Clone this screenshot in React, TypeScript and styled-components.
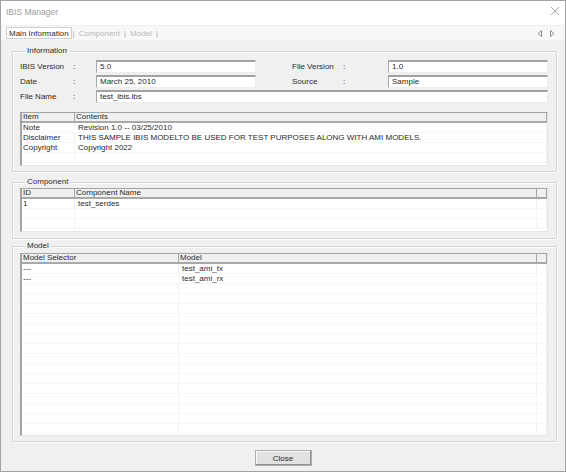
import styled, { createGlobalStyle } from "styled-components";

const GlobalStyle = createGlobalStyle`
  html, body {
    margin: 0;
    padding: 0;
    background: #f0f0f0;
  }
  body {
    font-family: "Liberation Sans", Arial, sans-serif;
    font-size: 8px;
    color: #2a2a2a;
  }
  * {
    box-sizing: border-box;
  }
`;

type Column = {
  title: string;
  width: string;
};

type TableProps = {
  columns: Column[];
  rows: string[][];
  height?: number;
  filler?: boolean;
  minRows: number;
};

const infoColumns: Column[] = [
  { title: "Item", width: "53px" },
  { title: "Contents", width: "1fr" },
];

const infoRows = [
  ["Note", "Revision 1.0 -- 03/25/2010"],
  ["Disclaimer", "THIS SAMPLE IBIS MODELTO BE USED FOR TEST PURPOSES ALONG WITH AMI MODELS."],
  ["Copyright", "Copyright 2022"],
];

const componentColumns: Column[] = [
  { title: "ID", width: "53px" },
  { title: "Component Name", width: "462px" },
];

const modelColumns: Column[] = [
  { title: "Model Selector", width: "157px" },
  { title: "Model", width: "358px" },
];

const modelRows = [
  ["---", "test_ami_tx"],
  ["---", "test_ami_rx"],
];

const DataTable = ({ columns, rows, height, filler, minRows }: TableProps) => {
  const template = columns.map((c) => c.width).join(" ") + (filler ? " 1fr" : "");
  const blanks = Math.max(0, minRows - rows.length);
  const allRows = [...rows, ...Array.from({ length: blanks }, () => columns.map(() => ""))];

  return (
    <TableFrame $height={height}>
      <HeaderRow style={{ gridTemplateColumns: template }}>
        {columns.map((c) => (
          <HeaderCell key={c.title}>{c.title}</HeaderCell>
        ))}
        {filler && <HeaderCell />}
      </HeaderRow>
      {allRows.map((row, i) => (
        <BodyRow key={i} style={{ gridTemplateColumns: template }}>
          {row.map((cell, j) => (
            <BodyCell key={j}>{cell}</BodyCell>
          ))}
          {filler && <BodyCell />}
        </BodyRow>
      ))}
    </TableFrame>
  );
};

const App = () => {
  return (
    <>
      <GlobalStyle />
      <Window>
        <TitleBar>
          <Title>IBIS Manager</Title>
          <CloseGlyph width="10" height="10" viewBox="0 0 10 10">
            <path d="M1 1 L9 9 M9 1 L1 9" stroke="#9a9a9a" strokeWidth="0.9" />
          </CloseGlyph>
        </TitleBar>

        <TabBar>
          <Tab $active>Main Information</Tab>
          <TabSep>|</TabSep>
          <Tab>Component</Tab>
          <TabSep>|</TabSep>
          <Tab>Model</Tab>
          <TabSep>|</TabSep>
          <TabArrows>
            <svg width="6" height="7" viewBox="0 0 6 7">
              <path d="M4.5 0.5 L1 3.5 L4.5 6.5 Z" fill="none" stroke="#777" strokeWidth="0.8" />
            </svg>
            <svg width="6" height="7" viewBox="0 0 6 7">
              <path d="M1.5 0.5 L5 3.5 L1.5 6.5 Z" fill="none" stroke="#777" strokeWidth="0.8" />
            </svg>
          </TabArrows>
        </TabBar>

        <Body>
          <GroupBox $top={6} $pad="4px 8px 5px 7px">
            <Legend>Information</Legend>
            <FieldGrid>
              <Label>IBIS Version</Label>
              <Colon>:</Colon>
              <TextBox>5.0</TextBox>
              <Spacer />
              <Label>File Version</Label>
              <Colon>:</Colon>
              <TextBox>1.0</TextBox>

              <Label>Date</Label>
              <Colon>:</Colon>
              <TextBox>March 25, 2010</TextBox>
              <Spacer />
              <Label>Source</Label>
              <Colon>:</Colon>
              <TextBox>Sample</TextBox>

              <Label>File Name</Label>
              <Colon>:</Colon>
              <TextBox $wide>test_ibis.ibs</TextBox>
            </FieldGrid>
            <TableGap />
            <DataTable columns={infoColumns} rows={infoRows} height={54} minRows={4} />
          </GroupBox>

          <GroupBox $top={5} $pad="1px 8px 6px 7px">
            <Legend>Component</Legend>
            <DataTable
              columns={componentColumns}
              rows={[["1", "test_serdes"]]}
              height={44}
              filler
              minRows={3}
            />
          </GroupBox>

          <GroupBox $top={2} $pad="2px 8px 5px 7px" $grow>
            <Legend>Model</Legend>
            <DataTable columns={modelColumns} rows={modelRows} filler minRows={18} />
          </GroupBox>
        </Body>

        <Footer>
          <CloseButton>Close</CloseButton>
        </Footer>
      </Window>
    </>
  );
};

const Window = styled.div`
  width: 566px;
  height: 472px;
  border: 1px solid #a3a3a3;
  background: #f0f0f0;
  display: flex;
  flex-direction: column;
  overflow: hidden;
`;

const TitleBar = styled.div`
  height: 24px;
  background: #fff;
  display: flex;
  align-items: center;
  justify-content: space-between;
  padding: 0 5px 2px 5px;
`;

const Title = styled.span`
  font-size: 8.5px;
  color: #9a9a9a;
`;

const CloseGlyph = styled.svg`
  margin-bottom: 3px;
`;

const TabBar = styled.div`
  height: 14px;
  margin-top: 1px;
  background: #f8f8f8;
  display: flex;
  align-items: stretch;
  padding-left: 5px;
`;

const Tab = styled.div<{ $active?: boolean }>`
  display: flex;
  align-items: center;
  padding: 0 2px;
  margin-top: 1px;
  height: 12px;
  color: ${(p) => (p.$active ? "#2a2a2a" : "#b8b8b8")};
  background: ${(p) => (p.$active ? "#fff" : "transparent")};
  border: 1px solid ${(p) => (p.$active ? "#cfcfcf" : "transparent")};
`;

const TabSep = styled.span`
  display: flex;
  align-items: center;
  color: #a8a8a8;
  padding: 0 1px;
`;

const TabArrows = styled.div`
  margin-left: auto;
  margin-right: 10px;
  display: flex;
  align-items: center;
  gap: 6px;
`;

const Body = styled.div`
  flex: 1;
  display: flex;
  flex-direction: column;
  padding: 0 8px 0 11px;
  min-height: 0;
`;

const GroupBox = styled.fieldset<{ $top: number; $pad: string; $grow?: boolean }>`
  margin: ${(p) => p.$top}px 0 0 0;
  padding: ${(p) => p.$pad};
  border: 1px solid #d6d6d6;
  box-shadow: inset 1px 1px 0 #fbfbfb, 1px 1px 0 #fbfbfb;
  min-width: 0;
  display: flex;
  flex-direction: column;
  flex: ${(p) => (p.$grow ? "1" : "none")};
  min-height: 0;
`;

const Legend = styled.legend`
  font-size: 8px;
  line-height: 10px;
  padding: 0 2px;
  margin-left: 5px;
`;

const FieldGrid = styled.div`
  display: grid;
  grid-template-columns: 53px 23px 160px 36px 51px 45px 1fr;
  grid-auto-rows: 13px;
  row-gap: 2px;
  align-items: center;
`;

const Label = styled.span`
  line-height: 10px;
`;

const Colon = styled.span`
  line-height: 10px;
`;

const Spacer = styled.span``;

const TextBox = styled.div<{ $wide?: boolean }>`
  height: 13px;
  grid-column: ${(p) => (p.$wide ? "3 / -1" : "auto")};
  background: #fff;
  border-top: 2px solid #a2a2a2;
  border-left: 1px solid #a8a8a8;
  border-right: 1px solid #ededed;
  border-bottom: 1px solid #ededed;
  padding: 0 3px;
  line-height: 10px;
  white-space: nowrap;
`;

const TableGap = styled.div`
  height: 9px;
`;

const TableFrame = styled.div<{ $height?: number }>`
  height: ${(p) => (p.$height ? `${p.$height}px` : "auto")};
  flex: ${(p) => (p.$height ? "none" : "1")};
  background: #fff;
  border-top: 1px solid #a4a4a4;
  border-left: 2px solid #a4a4a4;
  border-right: 1px solid #e6e6e6;
  border-bottom: 1px solid #e6e6e6;
  overflow: hidden;
`;

const HeaderRow = styled.div`
  display: grid;
  height: 10px;
  background: #f0f0f0;
  border-bottom: 2px solid #a8a8a8;
`;

const HeaderCell = styled.div`
  line-height: 8px;
  padding-left: 1px;
  border-right: 1.5px solid #a4a4a4;
  white-space: nowrap;
  overflow: hidden;
`;

const BodyRow = styled.div`
  display: grid;
  height: 10px;
  border-bottom: 1px solid #f6f6f6;
`;

const BodyCell = styled.div`
  line-height: 9px;
  padding-left: 1px;
  border-right: 1px solid #f2f2f2;
  white-space: nowrap;
  overflow: hidden;
  &:nth-child(2) {
    padding-left: 3px;
  }
`;

const Footer = styled.div`
  display: flex;
  justify-content: center;
  padding: 8px 0 5px 0;
`;

const CloseButton = styled.button`
  width: 57px;
  height: 16px;
  padding: 0;
  font-family: "Liberation Sans", Arial, sans-serif;
  font-size: 8px;
  color: #2a2a2a;
  background: #e1e1e1;
  border: 1px solid #adadad;
  box-shadow: inset -1px -1px 0 #8f8f8f, inset 1px 1px 0 #fafafa;
  border-radius: 0;
`;

export default App;
